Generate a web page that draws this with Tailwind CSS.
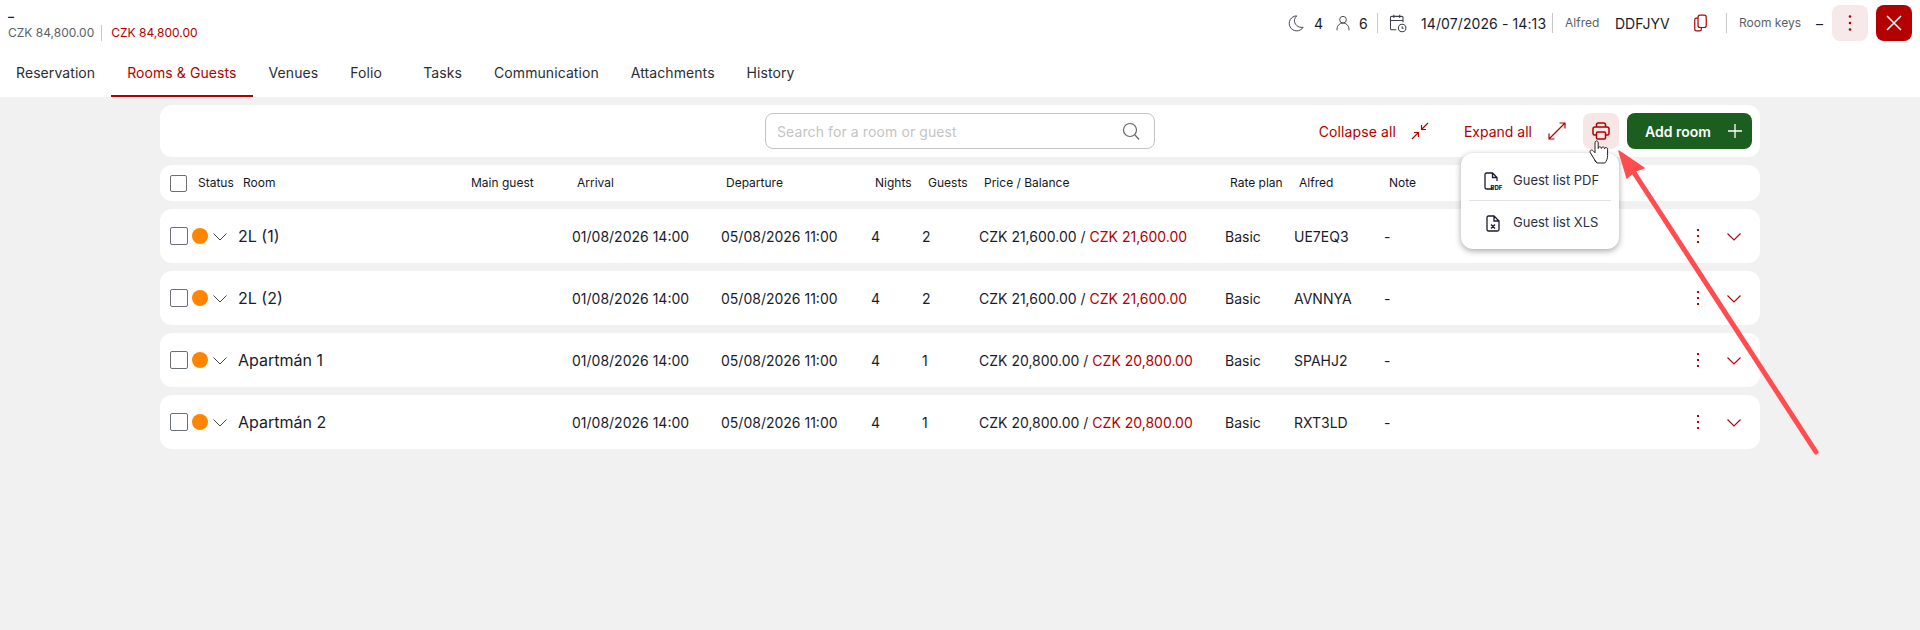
<!DOCTYPE html>
<html lang="en">
  <head>
    <meta charset="utf-8" />
    <meta content="width=device-width, initial-scale=1" name="viewport" />
    <title>Rooms &amp; Guests</title>
    <script src="https://cdn.jsdelivr.net/npm/@tailwindcss/browser@4"></script>
  </head>
  <body class="font-['Inter',sans-serif] bg-[#f1f1f1] text-[#1a1c2b]">
    <div class="relative h-[630px] w-[1920px] overflow-hidden">

      <!-- Header -->
      <header class="h-[97px] bg-white flex flex-col">
        <div class="h-[56px] flex justify-between">
          <div class="pl-2 pt-[9px]">
            <div class="text-[12px] leading-[15px] font-semibold">–</div>
            <div class="flex items-center text-[12px] leading-[16px] mt-[1px]">
              <span class="text-[#5c5f66] pr-[7px] border-r border-[#c9c9c9]">CZK 84,800.00</span>
              <span class="text-[#b30000] pl-[9px]">CZK 84,800.00</span>
            </div>
          </div>
          <div class="flex items-start pr-2 pt-[5px]">
            <div class="h-9 flex items-center text-[14px]">
              <svg class="w-[18px] h-[18px] text-[#3f424a]" fill="none" stroke="currentColor" stroke-width="1.300" viewBox="0 0 24 24"><path d="M13 2.500a10 10 0 1 0 8.500 15.200C15 19 9 13.500 10 7.500c.4-2 1.500-3.800 3-5z" stroke-linejoin="round" /></svg>
              <span class="ml-[9px] w-[8px]">4</span>
              <svg class="ml-[13px] w-[16px] h-[18px] text-[#3f424a]" fill="none" stroke="currentColor" stroke-width="1.400" viewBox="0 0 24 24"><circle cx="12" cy="7" r="5" /><path d="M3 23v-2a9 9 0 0 1 18 0v2" /></svg>
              <span class="ml-[8px] w-[9px]">6</span>
              <span class="ml-[9px] h-5 border-l border-[#c9c9c9]"></span>
              <svg class="ml-[10px] w-[20px] h-[20px] text-[#3f424a]" fill="none" stroke="currentColor" stroke-width="1.300" viewBox="0 0 24 24"><path d="M10 20H4.500A1.500 1.500 0 0 1 3 18.500V5.500A1.500 1.500 0 0 1 4.500 4h12A1.500 1.500 0 0 1 18 5.500V11M3 9h15M7 2v4M14 2v4" /><circle cx="17" cy="18" r="4.500" /><path d="M17 16v2.200h1.800" /></svg>
              <span class="ml-[13px] w-[123px] tracking-[0.1px] whitespace-nowrap">14/07/2026 - 14:13</span>
              <span class="ml-[8px] h-5 border-l border-[#c9c9c9]"></span>
              <span class="ml-[12px] w-[36px] text-[12px] text-[#5c5f66]">Alfred</span>
              <span class="ml-[14px] w-[56px]">DDFJYV</span>
              <svg class="ml-[21px] w-[17px] h-[18px] text-[#b30000]" fill="none" stroke="currentColor" stroke-width="1.500" viewBox="0 0 20 22"><rect x="7" y="1.500" width="10" height="15" rx="2.500" /><path d="M7 5H5a2 2 0 0 0-2 2v11.500a2 2 0 0 0 2 2h4a2 2 0 0 0 2-2v-2" /></svg>
              <span class="ml-[17px] h-5 border-l border-[#c9c9c9]"></span>
              <span class="ml-[12px] w-[62px] text-[12px] text-[#5c5f66] whitespace-nowrap">Room keys</span>
              <span class="ml-[15px] w-[8px]">–</span>
            </div>
            <button class="ml-2 w-9 h-9 rounded-lg bg-[#f7e9e9] flex items-center justify-center">
              <svg class="w-[4px] h-[18px] text-[#b30000]" fill="currentColor" viewBox="0 0 4 18"><circle cx="2" cy="2.500" r="1.300" /><circle cx="2" cy="9" r="1.300" /><circle cx="2" cy="15.500" r="1.300" /></svg>
            </button>
            <button class="ml-2 w-9 h-9 rounded-lg bg-[#b30000] flex items-center justify-center">
              <svg class="w-[18px] h-[18px] text-white" fill="none" stroke="currentColor" stroke-width="1.500" viewBox="0 0 18 18"><path d="M2 2l14 14M16 2L2 16" /></svg>
            </button>
          </div>
        </div>
        <nav class="flex h-[41px] text-[14px] tracking-[0.08px] text-[#2b2d36]">
          <a class="px-4 pt-[6px]">Reservation</a>
          <a class="px-4 pt-[6px] text-[#b30000] border-b-2 border-[#b30000]">Rooms &amp; Guests</a>
          <a class="px-4 pt-[6px]">Venues</a>
          <a class="px-4 pt-[6px] min-w-[73px]">Folio</a>
          <a class="px-4 pt-[6px]">Tasks</a>
          <a class="px-4 pt-[6px]">Communication</a>
          <a class="px-4 pt-[6px]">Attachments</a>
          <a class="px-4 pt-[6px]">History</a>
        </nav>
      </header>

      <main class="w-[1600px] ml-[160px] mt-2 flex flex-col gap-2">

        <!-- Toolbar -->
        <div class="h-[52px] bg-white rounded-xl grid grid-cols-[1fr_390px_1fr] items-center px-2">
          <div></div>
          <div class="h-9 rounded-lg border border-[#c4c4c4] flex items-center justify-between pl-[11px] pr-[14px]">
            <span class="text-[14px] tracking-[0.1px] text-[#c4c4c4]">Search for a room or guest</span>
            <svg class="w-[18px] h-[18px] text-[#666]" fill="none" stroke="currentColor" stroke-width="1.200" viewBox="0 0 18 18"><circle cx="8" cy="8" r="6.500" /><path d="M13 13l4 4.500" /></svg>
          </div>
          <div class="flex items-center justify-end text-[#b30000] text-[14px]">
            <span class="tracking-[0.1px]">Collapse all</span>
            <svg class="ml-[15px] w-[18px] h-[18px]" fill="none" stroke="currentColor" stroke-width="1.200" viewBox="0 0 18 18"><path d="M17 1l-6.500 6.500M10.500 3v4.500H15M1 17l6.500-6.500M3 10.500h4.500V15" /></svg>
            <span class="ml-[35px]">Expand all</span>
            <svg class="ml-[16px] w-[18px] h-[18px]" fill="none" stroke="currentColor" stroke-width="1.200" viewBox="0 0 18 18"><path d="M1 17L17 1M11.500 1H17v5.500M1 11.500V17h5.500" /></svg>

            <!-- Print menu -->
            <div class="relative ml-[17px]">
              <button class="w-9 h-9 rounded-lg bg-[#f7e6e6] flex items-center justify-center">
                <svg class="w-[18px] h-[18px]" fill="none" stroke="currentColor" stroke-width="1.500" viewBox="0 0 18 18"><path d="M4.500 5V2.800A1.800 1.800 0 0 1 6.300 1h5.400a1.800 1.800 0 0 1 1.800 1.800V5" /><path d="M4 13H2.500A1.500 1.500 0 0 1 1 11.500V7a2 2 0 0 1 2-2h12a2 2 0 0 1 2 2v4.500a1.500 1.500 0 0 1-1.500 1.500H14" /><rect x="4.500" y="10" width="9" height="7" rx="1" /></svg>
              </button>
              <div class="absolute z-10 right-0 top-10 w-[158px] h-[96px] bg-white rounded-xl shadow-[0_2px_6px_rgba(0,0,0,0.35)] text-[13px] text-[#2b3140] px-2">
                <div class="h-12 flex items-center border-b border-[#e3e3e3] pl-[15px] pt-2">
                  <svg class="w-[19px] h-[18px] text-[#1a1c2b]" fill="none" viewBox="0 0 19 18"><path d="M10 17H2.500A1.500 1.500 0 0 1 1 15.500V2.500A1.500 1.500 0 0 1 2.500 1h6L13 5.500V9M8.500 1v4.500H13" stroke="currentColor" stroke-width="1.300" /><text x="6.500" y="17.500" font-size="6" font-weight="800" fill="currentColor">PDF</text></svg>
                  <span class="ml-[10px]">Guest list PDF</span>
                </div>
                <div class="h-12 flex items-center pl-[17px] pb-1">
                  <svg class="w-[14px] h-[17px] text-[#1a1c2b]" fill="none" viewBox="0 0 14 17"><path d="M2.500 1H8l5 5v8.500a1.500 1.500 0 0 1-1.500 1.500h-9A1.500 1.500 0 0 1 1 14.500v-12A1.500 1.500 0 0 1 2.500 1zM8 1v5h5M5 9.500l4 4M9 9.500l-4 4" stroke="currentColor" stroke-width="1.300" /></svg>
                  <span class="ml-[13px]">Guest list XLS</span>
                </div>
              </div>
            </div>

            <button class="ml-2 w-[125px] h-9 rounded-lg bg-[#1b5e20] text-white font-semibold flex items-center justify-between pl-[18px] pr-[9px]">
              <span>Add room</span>
              <svg class="w-[16px] h-[16px]" fill="none" stroke="currentColor" stroke-width="1.300" viewBox="0 0 16 16"><path d="M8 1v14M1 8h14" /></svg>
            </button>
          </div>
        </div>

        <!-- Column headings -->
        <div class="h-9 bg-white rounded-xl flex items-center text-[12px] text-[#15171f] pl-[10px]">
          <span class="w-[17px] h-[17px] border border-[#6b6f7a] rounded-[2px]"></span>
          <span class="ml-[11px] w-[45px]">Status</span>
          <span class="w-[228px]">Room</span>
          <span class="w-[106px]">Main guest</span>
          <span class="w-[149px]">Arrival</span>
          <span class="w-[149px]">Departure</span>
          <span class="w-[53px]">Nights</span>
          <span class="w-[56px]">Guests</span>
          <span class="w-[246px]">Price / Balance</span>
          <span class="w-[69px]">Rate plan</span>
          <span class="w-[90px]">Alfred</span>
          <span>Note</span>
        </div>

        <!-- Rooms -->
        <div class="h-[54px] bg-white rounded-xl flex items-center text-[14px] pl-[10px]">
          <span class="w-[18px] h-[18px] border border-[#6b6f7a] rounded-[2px]"></span>
          <span class="ml-1 w-4 h-4 rounded-full bg-[#ff8500]"></span>
          <svg class="ml-[5px] w-[14px] h-[8px] mt-[2px] text-[#444]" fill="none" stroke="currentColor" stroke-width="1" viewBox="0 0 14 8"><path d="M0.500 0.500L7 7l6.500-6.500" /></svg>
          <span class="ml-[11px] w-[334px] text-[16px]">2L (1)</span>
          <span class="w-[149px]">01/08/2026 14:00</span>
          <span class="w-[150px]">05/08/2026 11:00</span>
          <span class="w-[51px]">4</span>
          <span class="w-[57px]">2</span>
          <span class="w-[246px]">CZK 21,600.00 / <span class="text-[#b30000]">CZK 21,600.00</span></span>
          <span class="w-[69px]">Basic</span>
          <span class="w-[90px]">UE7EQ3</span>
          <span class="flex-1">-</span>
          <svg class="w-[4px] h-[16px] text-[#b30000]" fill="currentColor" viewBox="0 0 4 16"><rect x="1" y="1" width="2" height="2" /><rect x="1" y="7" width="2" height="2" /><rect x="1" y="13" width="2" height="2" /></svg>
          <svg class="ml-[27px] mr-[19px] w-[14px] h-[8px] mt-[2px] text-[#b30000]" fill="none" stroke="currentColor" stroke-width="1.100" viewBox="0 0 14 8"><path d="M0.500 0.500L7 7l6.500-6.500" /></svg>
        </div>

        <div class="h-[54px] bg-white rounded-xl flex items-center text-[14px] pl-[10px]">
          <span class="w-[18px] h-[18px] border border-[#6b6f7a] rounded-[2px]"></span>
          <span class="ml-1 w-4 h-4 rounded-full bg-[#ff8500]"></span>
          <svg class="ml-[5px] w-[14px] h-[8px] mt-[2px] text-[#444]" fill="none" stroke="currentColor" stroke-width="1" viewBox="0 0 14 8"><path d="M0.500 0.500L7 7l6.500-6.500" /></svg>
          <span class="ml-[11px] w-[334px] text-[16px]">2L (2)</span>
          <span class="w-[149px]">01/08/2026 14:00</span>
          <span class="w-[150px]">05/08/2026 11:00</span>
          <span class="w-[51px]">4</span>
          <span class="w-[57px]">2</span>
          <span class="w-[246px]">CZK 21,600.00 / <span class="text-[#b30000]">CZK 21,600.00</span></span>
          <span class="w-[69px]">Basic</span>
          <span class="w-[90px]">AVNNYA</span>
          <span class="flex-1">-</span>
          <svg class="w-[4px] h-[16px] text-[#b30000]" fill="currentColor" viewBox="0 0 4 16"><rect x="1" y="1" width="2" height="2" /><rect x="1" y="7" width="2" height="2" /><rect x="1" y="13" width="2" height="2" /></svg>
          <svg class="ml-[27px] mr-[19px] w-[14px] h-[8px] mt-[2px] text-[#b30000]" fill="none" stroke="currentColor" stroke-width="1.100" viewBox="0 0 14 8"><path d="M0.500 0.500L7 7l6.500-6.500" /></svg>
        </div>

        <div class="h-[54px] bg-white rounded-xl flex items-center text-[14px] pl-[10px]">
          <span class="w-[18px] h-[18px] border border-[#6b6f7a] rounded-[2px]"></span>
          <span class="ml-1 w-4 h-4 rounded-full bg-[#ff8500]"></span>
          <svg class="ml-[5px] w-[14px] h-[8px] mt-[2px] text-[#444]" fill="none" stroke="currentColor" stroke-width="1" viewBox="0 0 14 8"><path d="M0.500 0.500L7 7l6.500-6.500" /></svg>
          <span class="ml-[11px] w-[334px] text-[16px]">Apartmán 1</span>
          <span class="w-[149px]">01/08/2026 14:00</span>
          <span class="w-[150px]">05/08/2026 11:00</span>
          <span class="w-[51px]">4</span>
          <span class="w-[57px]">1</span>
          <span class="w-[246px]">CZK 20,800.00 / <span class="text-[#b30000]">CZK 20,800.00</span></span>
          <span class="w-[69px]">Basic</span>
          <span class="w-[90px]">SPAHJ2</span>
          <span class="flex-1">-</span>
          <svg class="w-[4px] h-[16px] text-[#b30000]" fill="currentColor" viewBox="0 0 4 16"><rect x="1" y="1" width="2" height="2" /><rect x="1" y="7" width="2" height="2" /><rect x="1" y="13" width="2" height="2" /></svg>
          <svg class="ml-[27px] mr-[19px] w-[14px] h-[8px] mt-[2px] text-[#b30000]" fill="none" stroke="currentColor" stroke-width="1.100" viewBox="0 0 14 8"><path d="M0.500 0.500L7 7l6.500-6.500" /></svg>
        </div>

        <div class="h-[54px] bg-white rounded-xl flex items-center text-[14px] pl-[10px]">
          <span class="w-[18px] h-[18px] border border-[#6b6f7a] rounded-[2px]"></span>
          <span class="ml-1 w-4 h-4 rounded-full bg-[#ff8500]"></span>
          <svg class="ml-[5px] w-[14px] h-[8px] mt-[2px] text-[#444]" fill="none" stroke="currentColor" stroke-width="1" viewBox="0 0 14 8"><path d="M0.500 0.500L7 7l6.500-6.500" /></svg>
          <span class="ml-[11px] w-[334px] text-[16px]">Apartmán 2</span>
          <span class="w-[149px]">01/08/2026 14:00</span>
          <span class="w-[150px]">05/08/2026 11:00</span>
          <span class="w-[51px]">4</span>
          <span class="w-[57px]">1</span>
          <span class="w-[246px]">CZK 20,800.00 / <span class="text-[#b30000]">CZK 20,800.00</span></span>
          <span class="w-[69px]">Basic</span>
          <span class="w-[90px]">RXT3LD</span>
          <span class="flex-1">-</span>
          <svg class="w-[4px] h-[16px] text-[#b30000]" fill="currentColor" viewBox="0 0 4 16"><rect x="1" y="1" width="2" height="2" /><rect x="1" y="7" width="2" height="2" /><rect x="1" y="13" width="2" height="2" /></svg>
          <svg class="ml-[27px] mr-[19px] w-[14px] h-[8px] mt-[2px] text-[#b30000]" fill="none" stroke="currentColor" stroke-width="1.100" viewBox="0 0 14 8"><path d="M0.500 0.500L7 7l6.500-6.500" /></svg>
        </div>
      </main>

      <!-- Annotation arrow and cursor drawn over the screenshot -->
      <svg class="absolute z-20 left-0 top-0 pointer-events-none" width="1920" height="630" viewBox="0 0 1920 630">
        <path d="M1816 452L1631 168" stroke="#ff4d4f" stroke-width="5" stroke-linecap="round" fill="none" />
        <path d="M1619 151L1644 168L1635 171L1627 178Z" fill="#ff4d4f" stroke="#ff4d4f" stroke-width="1.500" stroke-linejoin="round" />
        <path transform="translate(0 1)" d="M1596 161l-5.500-9c-1.500-2.400 1-4 2.700-2.200l1.800 2V142c0-2.700 3.200-2.700 3.200 0v5.500c0-2.200 3.200-2.200 3.200 0 0-2 3.200-2 3.200.2 0-1.700 3-1.700 3 .5v6.300c0 3.200-1 5.500-2.800 7.500h-7.800c-.7-.7-1.300-1.500-2-2.500z" fill="#fff" stroke="#222" stroke-width="1" stroke-linejoin="round" />
      </svg>
    </div>
  </body>
</html>
